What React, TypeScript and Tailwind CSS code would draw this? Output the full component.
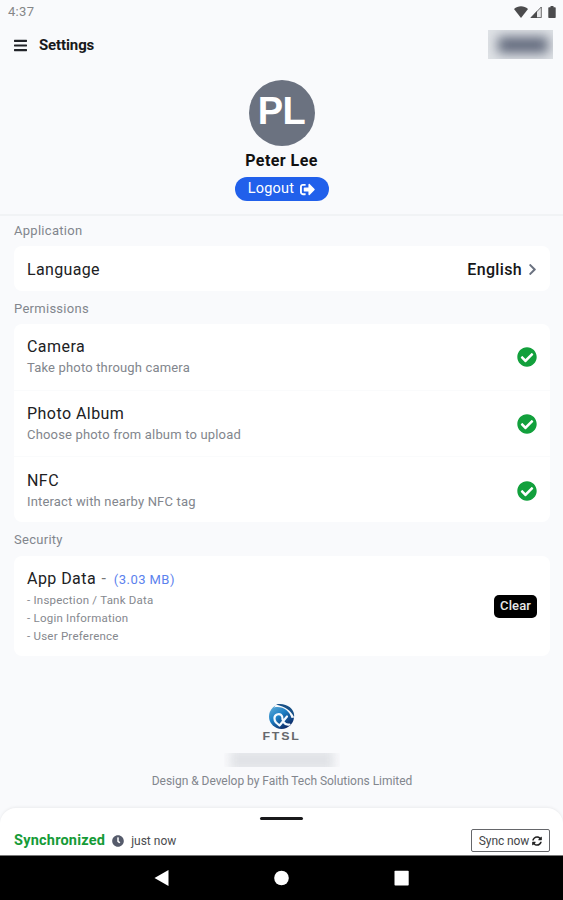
import React from 'react';
import {
  FaBars,
  FaCheckCircle,
  FaChevronRight,
  FaClock,
  FaSignOutAlt,
  FaSyncAlt,
} from 'react-icons/fa';

const permissions = [
  { title: 'Camera', description: 'Take photo through camera' },
  { title: 'Photo Album', description: 'Choose photo from album to upload' },
  { title: 'NFC', description: 'Interact with nearby NFC tag' },
];

const appData = ['Inspection / Tank Data', 'Login Information', 'User Preference'];

function StatusBar() {
  return (
    <div className="flex h-6 items-center justify-between pl-2 pr-[7px]">
      <span className="text-[13px] tracking-[0.3px] text-[#858688]">4:37</span>
      <div className="flex items-center pb-px text-[#4b4b4d]">
        <svg className="h-[12px] w-[14px]" viewBox="0 0 14 12" fill="currentColor">
          <path d="M7 12 0 2.9C4 -.7 10 -.7 14 2.9Z" />
        </svg>
        <svg className="ml-[2px] h-[12px] w-[12px]" viewBox="0 0 12 12" fill="currentColor">
          <path d="M.5 12 11.5.5V12Z" fillOpacity=".1" />
          <path d="M.5 12 7 5V12Z" />
          <path d="M1 11.6 11.3 1V11.6Z" fill="none" stroke="currentColor" strokeWidth=".8" />
        </svg>
        <svg className="ml-[6px] h-[12px] w-[8px]" viewBox="0 0 8 12" fill="currentColor">
          <path d="M2.5 0h3v1.3H7q.7 0 .7.7v9.3q0 .7-.7.7H1q-.7 0-.7-.7V2q0-.7.7-.7h1.5Z" />
        </svg>
      </div>
    </div>
  );
}

function Header() {
  return (
    <header className="flex h-[42px] items-center justify-between pl-[14px] pr-[10px]">
      <div className="flex items-center gap-[12px]">
        <FaBars className="h-[15px] w-[13px] text-[#222429]" />
        <h1 className="text-[15px] font-bold tracking-[-0.12px] text-[#18191b]">Settings</h1>
      </div>
      {/* redacted account name */}
      <div className="mb-[2px] h-[29px] w-[65px] overflow-hidden bg-[#dfe2e6]">
        <div className="ml-[10px] mt-[7px] h-[16px] w-[50px] bg-[#5f677a] blur-[6px]" />
      </div>
    </header>
  );
}

function Profile() {
  return (
    <section className="flex h-[150px] flex-col items-center border-b-2 border-[#f1f3f5] pt-[14px]">
      <div className="flex size-[66px] shrink-0 items-center justify-center rounded-full bg-[#6b7280] pb-[4px] font-['Liberation_Sans',sans-serif] text-[38px] leading-none font-bold tracking-[-0.5px] text-white">
        <span>PL</span>
      </div>
      <h2 className="mt-[3px] text-base leading-6 font-bold tracking-[0.45px] text-[#111]">Peter Lee</h2>
      <button className="mt-[4px] flex h-6 w-[94px] items-center justify-center gap-[6px] rounded-full bg-[#2160eb] text-[14.5px] tracking-[0.25px] text-white">
        Logout
        <FaSignOutAlt className="size-[15px]" />
      </button>
    </section>
  );
}

function SectionLabel({ children }: { children: React.ReactNode }) {
  return <h3 className="text-[13px] tracking-[0.28px] text-[#82868d]">{children}</h3>;
}

function Logo() {
  return (
    <svg className="h-[40px] w-[42px]" viewBox="0 0 42 40">
      <defs>
        <linearGradient id="globe" x1="0" y1="0" x2=".7" y2="1">
          <stop offset="0" stopColor="#6db4dc" />
          <stop offset=".5" stopColor="#1d7fc4" />
          <stop offset="1" stopColor="#0b2460" />
        </linearGradient>
      </defs>
      <circle cx="20.5" cy="13.5" r="12.5" fill="url(#globe)" />
      {/* swoosh and outer rim */}
      <path d="M13 4.500C21 2.500 28.500 7.500 30.500 15L36 14V0H16Z" fill="#f9fafc" />
      <path d="M15 1.500C25 -.8 34.500 6 33 14C30 7.500 24.500 4 15 1.500Z" fill="#174f86" />
      {/* looped check mark */}
      <path
        d="M21.500 16.500C22 12 19 10.500 16 11.500C12.500 13 13 17 15 19.500L18.500 22.500L26 13.500M22.500 19Q25 22.500 28.500 21.500"
        fill="none"
        stroke="#f4faff"
        strokeWidth="2.200"
        strokeLinecap="round"
        strokeLinejoin="round"
      />
      <text
        x="1.300"
        y="37"
        fontFamily="Liberation Sans, sans-serif"
        fontSize="10.500"
        fontWeight="700"
        letterSpacing="1.500"
        transform="scale(1.18 1)"
        fill="#66686c"
      >
        FTSL
      </text>
    </svg>
  );
}

function SyncSheet() {
  return (
    <footer className="h-[47px] rounded-t-[16px] bg-white shadow-[0_-1px_3px_rgba(0,0,0,0.06)]">
      <div className="flex h-[21px] items-center justify-center">
        <div className="h-[3px] w-[43px] rounded-full bg-[#19191b]" />
      </div>
      <div className="flex h-[23px] items-center justify-between pl-[14px] pr-[13px]">
        <div className="flex items-center">
          <span className="text-[14.5px] font-bold tracking-[0.22px] text-[#159b37]">Synchronized</span>
          <FaClock className="ml-[7px] size-[12px] text-[#555b6b]" />
          <span className="ml-[7px] text-[12px] text-[#4b4c4f]">just now</span>
        </div>
        <button className="flex h-[23px] w-[79px] items-center justify-center gap-[3px] rounded-[2px] border border-[#65666a] text-[12px] tracking-[-0.1px] text-[#444548]">
          Sync now
          <FaSyncAlt className="size-[10px] text-[#222]" />
        </button>
      </div>
    </footer>
  );
}

function NavigationBar() {
  return (
    <nav className="flex h-[45px] items-center justify-center border-t border-[#777] bg-black text-white">
      <svg className="h-4 w-[255px]" viewBox="0 0 255 16" fill="currentColor">
        <path d="M.5 8 14.500 0V16Z" />
        <circle cx="127.500" cy="8" r="7.300" />
        <rect x="240.500" y=".7" width="14.200" height="14.800" rx=".8" />
      </svg>
    </nav>
  );
}

export default function App() {
  return (
    <div className="flex h-[900px] w-[563px] flex-col overflow-hidden bg-[#f9fafc] font-['Roboto',sans-serif]">
      <StatusBar />
      <Header />
      <Profile />

      <main className="flex-1 pl-[14px] pr-[13px]">
        <div className="flex h-[30px] items-center pb-px">
          <SectionLabel>Application</SectionLabel>
        </div>
        <div className="flex h-[45px] items-center justify-between rounded-lg bg-white px-[13px] pt-[2px]">
          <span className="text-base tracking-[0.35px] text-[#202123]">Language</span>
          <div className="flex items-center gap-[6px]">
            <span className="text-base font-medium tracking-[0.35px] text-[#151617]">English</span>
            <FaChevronRight className="h-[13px] w-[9px] text-[#6b7280]" />
          </div>
        </div>

        <div className="flex h-[33px] items-center pt-[2px]">
          <SectionLabel>Permissions</SectionLabel>
        </div>
        <div className="h-[198px] divide-y divide-[#fafbfc] overflow-hidden rounded-lg bg-white">
          {permissions.map(({ title, description }) => (
            <div key={title} className="flex h-[66.7px] items-center justify-between px-[13px]">
              <div>
                <p className="text-base leading-[23px] tracking-[0.45px] text-[#202123]">{title}</p>
                <p className="text-[13px] leading-5 tracking-[0.17px] text-[#82868d]">{description}</p>
              </div>
              <FaCheckCircle className="size-[20px] text-[#12a03c]" />
            </div>
          ))}
        </div>

        <div className="flex h-[34px] items-center pt-px">
          <SectionLabel>Security</SectionLabel>
        </div>
        <div className="flex h-[100px] items-center justify-between rounded-lg bg-white px-[13px]">
          <div>
            <p className="text-base leading-6 tracking-[0.45px] text-[#202123]">
              App Data <span className="ml-[1px] mr-[3px] text-[#777]">-</span>{' '}
              <span className="text-[13px] text-[#5b82ee]">(3.03 MB)</span>
            </p>
            <div className="-mt-px mb-px">
              {appData.map((item) => (
                <p key={item} className="text-[11.5px] leading-[18px] tracking-[0.23px] text-[#85888e]">
                  - {item}
                </p>
              ))}
            </div>
          </div>
          <button className="h-[23px] w-[43px] rounded-[5px] bg-black text-[13px] font-medium tracking-[0.1px] text-[#e8e8e8]">
            Clear
          </button>
        </div>

        <div className="mt-[47px] flex flex-col items-center">
          <Logo />
          {/* redacted version number */}
          <div className="mt-[10px] h-[14px] w-[116px] overflow-hidden">
            <div className="mx-[6px] -mt-1 h-[22px] bg-[#e1e3e7] blur-[5px]" />
          </div>
          <p className="mt-[5px] text-[12px] leading-[18px] tracking-[-0.03px] text-[#82868d]">
            Design &amp; Develop by Faith Tech Solutions Limited
          </p>
        </div>
      </main>

      <SyncSheet />
      <NavigationBar />
    </div>
  );
}
